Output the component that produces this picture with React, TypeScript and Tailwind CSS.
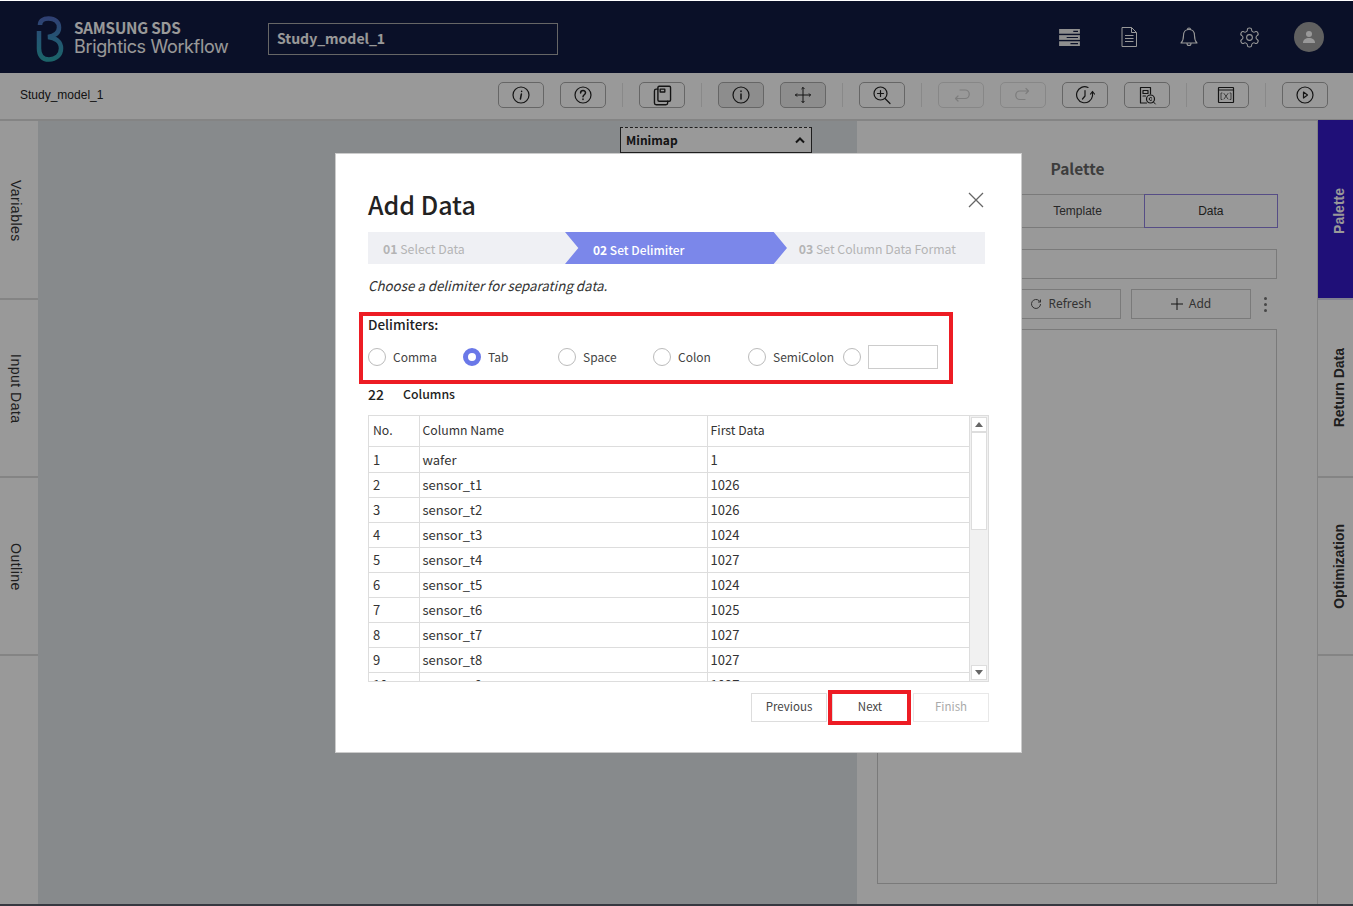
import React from 'react';

const NOTO = "font-['Noto_Sans_CJK_KR','Noto_Sans',sans-serif]";

const rows = [
  ['1', 'wafer', '1'],
  ['2', 'sensor_t1', '1026'],
  ['3', 'sensor_t2', '1026'],
  ['4', 'sensor_t3', '1024'],
  ['5', 'sensor_t4', '1027'],
  ['6', 'sensor_t5', '1024'],
  ['7', 'sensor_t6', '1025'],
  ['8', 'sensor_t7', '1027'],
  ['9', 'sensor_t8', '1027'],
  ['10', 'sensor_t9', '1027'],
];

const delimiters = ['Comma', 'Tab', 'Space', 'Colon', 'SemiColon'];

const Ico: React.FC<{ children: React.ReactNode; size?: number; color?: string }> = ({ children, size = 20, color = '#222' }) => (
  <svg width={size} height={size} viewBox="0 0 20 20" fill="none" stroke={color} strokeWidth="1.2" strokeLinecap="round" strokeLinejoin="round">
    {children}
  </svg>
);

const toolbar: (React.ReactNode | 'sep')[] = [
  <Ico><circle cx="10" cy="10" r="8" /><path d="M10.6 6.2v.4M10.4 9l-1 5" strokeWidth="1.5" /></Ico>,
  <Ico><circle cx="10" cy="10" r="8" /><path d="M7.6 8c0-3.2 4.9-3.2 4.9-.2 0 1.900-2.500 2-2.500 4M10 14v.4" strokeWidth="1.5" /></Ico>,
  'sep',
  <Ico size={23}><rect x="6" y="2" width="11" height="13" rx="1" /><path d="M6 4.500H4.500A1.500 1.500 0 0 0 3 6v10.500A1.500 1.500 0 0 0 4.500 18H13a1.500 1.500 0 0 0 1.500-1.500V15M8 4.500h4v2.500H8z" /></Ico>,
  'sep',
  <Ico><circle cx="10" cy="10" r="8" /><path d="M10 6v.4M10 9v5" strokeWidth="1.5" /></Ico>,
  <Ico><path d="M10 2.500v15M2.500 10h15M8.700 3.800L10 2.500l1.300 1.300M8.700 16.200L10 17.500l1.300-1.300M3.800 8.700L2.500 10l1.300 1.300M16.200 8.700L17.500 10l-1.300 1.300" strokeWidth="1" /></Ico>,
  'sep',
  <Ico><circle cx="8.500" cy="8.500" r="6.500" /><path d="M8.500 5.500v6M5.500 8.500h6M13 13.500l5 5" /></Ico>,
  'sep',
  <Ico color="#d0d0d0"><path d="M9 5h5a4.200 4.200 0 0 1 0 8.500H4.500M7 11l-2.500 2.500L7 16" /></Ico>,
  <Ico color="#d0d0d0"><path d="M15.500 6H7a4.200 4.200 0 0 0 0 8.500h5M13 3.500L15.500 6 13 8.500" /></Ico>,
  <Ico><path d="M13 2.500A8 8 0 1 0 17.500 11V7M15.500 9l2-2.500 2 2.500M10 5.500v5.500l-2.500 3" /></Ico>,
  <Ico><path d="M9.500 18H3.500V2.500h10v6.500M6 5.500h5v3H6zM6 11h2.500" /><circle cx="13.500" cy="14" r="4" /><path d="M14.800 13a1.500 1.500 0 1 0 0 2M16.500 17l1.800 2" strokeWidth="1" /></Ico>,
  'sep',
  <Ico><rect x="2.500" y="2.500" width="15" height="15" rx="0.500" /><path d="M2.500 5h15" /><path d="M6 8H5v6.500h1M14 8h1v6.500h-1M8 8.500l4 5.500M12 8.500L8 14" strokeWidth="0.900" stroke="#555" /></Ico>,
  'sep',
  <Ico><circle cx="10" cy="10" r="8" /><path d="M8.500 7l4 3-4 3z" /></Ico>,
];

const Logo = () => (
  <svg className="mt-[4px]" width="28" height="46" viewBox="0 0 28 46" fill="none">
    <defs>
      <linearGradient id="lg" x1="0" y1="0" x2="0" y2="1">
        <stop offset="0" stopColor="#4f6cc0" />
        <stop offset="0.5" stopColor="#3c8fc0" />
        <stop offset="1" stopColor="#2fa7b0" />
      </linearGradient>
    </defs>
    <path d="M4 9C4 5 7 2.500 12.500 2.500 19 2.500 23 6 23 11.500c0 5.500-5 8.500-11 9.500 7 .5 13 4.500 13 11.500 0 6.500-5 11-12 11S3 39 3 32.500V15" stroke="url(#lg)" strokeWidth="4.500" />
  </svg>
);

const SideTab: React.FC<{ label: string; active?: boolean; right?: boolean; h: string }> = ({ label, active, right, h }) => (
  <div className={`${h} flex items-center justify-center border-b-2 ${right ? 'pl-[7px]' : 'pr-[7px] pt-[2px]'} ${active ? 'pt-[3px] bg-[#341ac8] text-white border-[#d8d8f0]' : 'bg-white text-[#333] border-[#dcdcdc]'}`}>
    <span
      className={`text-[14px] ${right ? 'rotate-180 font-bold' : 'tracking-[0.5px]'} [writing-mode:vertical-rl] font-['Liberation_Sans',sans-serif]`}
    >
      {label}
    </span>
  </div>
);

export default function App() {
  return (
    <div className="relative w-[1353px] h-[906px] overflow-hidden bg-white">
      <div className="h-px bg-white" />
      {/* HEADER */}
      <header className="h-[72px] bg-[#121c43] flex items-center pl-[36px] pr-[29px]">
        <Logo />
        <div className="ml-[10px] w-[194px] text-white">
          <div className={`${NOTO} text-[16px] font-bold leading-[20px] tracking-[-0.2px] scale-x-95 origin-left whitespace-nowrap`}>SAMSUNG SDS</div>
          <div className="font-['Inter',sans-serif] text-[18px] leading-[20px] font-normal tracking-[-0.35px] whitespace-nowrap">Brightics Workflow</div>
        </div>
        <div className={`mt-[4px] w-[290px] h-[32px] border border-[#aaa] flex items-center pl-[8px] pb-[2px] text-white text-[14px] font-semibold ${NOTO}`}>
          Study_model_1
        </div>
        <div className="ml-auto flex items-center gap-[30px]">
          <div className="w-[30px] flex justify-center">
            <svg width="21" height="17" viewBox="0 0 22 18">
              <rect x="0" y="0" width="22" height="5" fill="#eee" />
              <rect x="0" y="6.500" width="22" height="5" fill="#eee" />
              <rect x="0" y="13" width="22" height="5" fill="#eee" />
              <path d="M15 2.500h5M8 9h12M12 15.500h8" stroke="#121c43" strokeWidth="1.200" />
            </svg>
          </div>
          <div className="w-[30px] flex justify-center">
            <svg width="16" height="20" viewBox="0 0 16 20" fill="none" stroke="#fff" strokeWidth="1">
              <path d="M1 .5h9.500L15.500 5.500v14H1zM10.500 .5v5h5M4 8.500h8.500M4 11.500h8.500M4 14.500h8.500" />
            </svg>
          </div>
          <div className="w-[30px] flex justify-center">
            <svg width="18" height="22" viewBox="0 0 18 22" fill="none" stroke="#fff" strokeWidth="1.100" strokeLinejoin="round">
              <path d="M1 17c2-2 2.500-4 2.500-7.500S5.500 3.500 9 3.500s5.500 2.500 5.500 6 .5 5.500 2.500 7.500zM7.500 3.500a1.500 1.500 0 0 1 3 0M7 17.500a2 2 0 0 0 4 0" />
            </svg>
          </div>
          <div className="w-[30px] flex justify-center">
            <svg width="23" height="23" viewBox="0 0 24 24" fill="none" stroke="#fff" strokeWidth="1.100">
              <path d="M12.220 2h-.44a2 2 0 0 0-2 2v.18a2 2 0 0 1-1 1.730l-.43.250a2 2 0 0 1-2 0l-.150-.080a2 2 0 0 0-2.730.730l-.220.380a2 2 0 0 0 .730 2.730l.150.100a2 2 0 0 1 1 1.720v.510a2 2 0 0 1-1 1.740l-.150.090a2 2 0 0 0-.730 2.730l.220.380a2 2 0 0 0 2.730.730l.150-.080a2 2 0 0 1 2 0l.430.250a2 2 0 0 1 1 1.730V20a2 2 0 0 0 2 2h.44a2 2 0 0 0 2-2v-.18a2 2 0 0 1 1-1.730l.430-.250a2 2 0 0 1 2 0l.150.080a2 2 0 0 0 2.730-.730l.220-.390a2 2 0 0 0-.730-2.730l-.150-.080a2 2 0 0 1-1-1.740v-.500a2 2 0 0 1 1-1.740l.150-.090a2 2 0 0 0 .730-2.730l-.220-.380a2 2 0 0 0-2.730-.730l-.150.080a2 2 0 0 1-2 0l-.430-.250a2 2 0 0 1-1-1.730V4a2 2 0 0 0-2-2z" />
              <circle cx="12" cy="12" r="3" />
            </svg>
          </div>
          <div className="w-[30px] h-[30px] rounded-full bg-[#a0a0a0] flex items-center justify-center">
            <svg width="14" height="14" viewBox="0 0 14 14" fill="#fff">
              <circle cx="7" cy="4" r="3" />
              <path d="M1 13c0-3.500 2.500-5 6-5s6 1.500 6 5z" />
            </svg>
          </div>
        </div>
      </header>

      {/* TOOLBAR */}
      <div className="h-[48px] bg-white border-b-2 border-[#ddd] flex items-center pl-[20px] pr-[25px] pb-[2px]">
        <span className="text-[12px] text-[#222] font-['Liberation_Sans',sans-serif]">Study_model_1</span>
        <div className="ml-auto flex items-center gap-4">
          {toolbar.map((item, i) =>
            item === 'sep' ? (
              <div key={i} className="w-px h-[24px] bg-[#e4e4e4]" />
            ) : (
              <button
                key={i}
                className={`w-[46px] h-[26px] rounded-[5px] border flex items-center justify-center ${
                  i === 5 || i === 6 ? 'bg-[#ececec] border-[#aaa]' : i === 10 || i === 11 ? 'border-[#e2e2e2] bg-white' : 'border-[#aaa] bg-white'
                }`}
              >
                {item}
              </button>
            )
          )}
        </div>
      </div>

      {/* BODY */}
      <div className="relative flex h-[783px]">
        <div className="w-[38px] bg-white flex flex-col">
          <SideTab h="h-[179px]" label="Variables" />
          <SideTab h="h-[178px]" label="Input Data" />
          <SideTab h="h-[178px]" label="Outline" />
        </div>
        <div className="relative flex-1 bg-[#e1e6ea]">
          <div className="absolute left-[582px] top-[6px] w-[192px] h-[26px] bg-white border border-[#333] [border-top-style:dashed] flex items-center justify-between px-[5px]">
            <span className={`${NOTO} text-[12px] font-semibold text-[#222]`}>Minimap</span>
            <svg width="12" height="8" viewBox="0 0 12 8" fill="none" stroke="#222" strokeWidth="2">
              <path d="M2 6.500l4-4 4 4" />
            </svg>
          </div>
        </div>
        <div className="w-[461px] bg-white border-r border-[#ddd] pl-[20px] flex flex-col">
          <div className={`${NOTO} h-[73px] pt-[33px] w-[401px] text-center text-[15.500px] font-semibold leading-[28px] text-[#666]`}>Palette</div>
          <div className="flex h-[35px] w-[401px] pb-px font-['Liberation_Sans',sans-serif] text-[12px] text-[#444]">
            <div className="flex-1 border border-[#ccc] flex items-center justify-center">Library</div>
            <div className="flex-1 border-y border-r border-[#ccc] flex items-center justify-center">Template</div>
            <div className="flex-1 border border-[#8f80e0] -ml-px flex items-center justify-center text-[#333]">Data</div>
          </div>
          <div className="mt-[20px] h-[30px] w-[400px] border border-[#ccc]" />
          <div className="mt-[10px] h-[30px] w-[400px] flex items-center justify-end gap-[10px] pr-[26px] text-[12px] text-[#555] font-['Noto_Sans',sans-serif]">
            <div className="w-[120px] h-[30px] border border-[#ccc] flex items-center justify-center gap-[6px]">
              <svg width="12" height="12" viewBox="0 0 24 24" fill="none" stroke="#555" strokeWidth="2">
                <path d="M21 12a9 9 0 1 1-2.600-6.400L21 8M21 3v5h-5" />
              </svg>
              Refresh
            </div>
            <div className="w-[120px] h-[30px] border border-[#ccc] flex items-center justify-center gap-[6px]">
              <svg width="12" height="12" viewBox="0 0 12 12" stroke="#222" strokeWidth="1">
                <path d="M6 0v12M0 6h12" />
              </svg>
              Add
            </div>
            <div className="absolute right-[86px] w-[3px] flex flex-col gap-[3px]">
              <span className="w-[3px] h-[3px] rounded-full bg-[#777]" />
              <span className="w-[3px] h-[3px] rounded-full bg-[#777]" />
              <span className="w-[3px] h-[3px] rounded-full bg-[#777]" />
            </div>
          </div>
          <div className="mt-[10px] h-[555px] w-[400px] border border-[#ccc]" />
        </div>
        <div className="w-[35px] -mt-px bg-white flex flex-col">
          <SideTab h="h-[180px]" label="Palette" right active />
          <SideTab h="h-[178px]" label="Return Data" right />
          <SideTab h="h-[178px]" label="Optimization" right />
        </div>
      </div>
      <div className="h-[2px] bg-[#5a5e6b]" />

      {/* OVERLAY */}
      <div className="absolute left-0 right-0 top-px bottom-0 bg-black/40" />

      {/* MODAL */}
      <div className={`absolute left-[335px] top-[153px] w-[687px] h-[600px] bg-white border border-[#ccc] pt-[34px] pl-[32px] pr-[32px] ${NOTO} text-[#333]`}>
        <div className="relative h-[34px] -top-px">
          <h1 className="text-[25px] font-medium leading-[34px] text-[#222]">Add Data</h1>
          <svg className="absolute left-[600px] top-[5px]" width="16" height="16" viewBox="0 0 16 16" stroke="#666" strokeWidth="1.300">
            <path d="M1 1l14 14M15 1L1 15" />
          </svg>
        </div>

        <div className="mt-[10px] h-[32px] w-[617px] bg-[#eff0f4] relative flex items-center pt-[3px] text-[12.300px] text-[#b4b4b4]">
          <div className="w-[197px] pl-[15px]"><b className="font-bold">01</b> Select Data</div>
          <div className="absolute left-[197px] top-0 h-[32px] w-[222px] bg-[#7b87ea] [clip-path:polygon(0_0,94%_0,100%_50%,94%_100%,0_100%,6%_50%)] flex items-center pt-[3px] pl-[28px] text-[12px] text-white font-medium">
            <span><b className="font-bold">02</b> Set Delimiter</span>
          </div>
          <div className="ml-auto pr-[29px]"><b className="font-bold">03</b> Set Column Data Format</div>
        </div>

        <p className="mt-[12px] h-[20px] text-[13.300px] leading-[20px] italic text-[#333]">Choose a delimiter for separating data.</p>

        <div className="mt-[18px] h-[20px] text-[13.500px] leading-[20px] font-medium text-[#222]">Delimiters:</div>

        <div className="mt-[11px] h-[24px] flex items-center text-[12px] text-[#444]">
          {delimiters.map(d => (
            <div key={d} className="w-[95px] flex items-center gap-[7px]">
              <span className={`w-[18px] h-[18px] rounded-full bg-white shrink-0 ${d === 'Tab' ? 'border-[5px] border-[#6a78e8]' : 'border border-[#bbb]'}`} />
              {d}
            </div>
          ))}
          <span className="w-[18px] h-[18px] rounded-full border border-[#bbb] shrink-0" />
          <div className="ml-[7px] w-[70px] h-[24px] border border-[#ccc]" />
        </div>

        <div className="mt-[15px] h-[20px] flex items-center text-[12.300px] font-medium text-[#222]">
          <span className="w-[35px] text-[14px]">22</span>
          <span>Columns</span>
        </div>

        <div className="mt-[11px] w-[621px] h-[267px] border border-[#ddd] flex overflow-hidden text-[13px] text-[#333]">
          <table className="w-[601px] h-fit table-fixed border-collapse shrink-0">
            <colgroup>
              <col className="w-[50px]" />
              <col className="w-[288px]" />
              <col />
            </colgroup>
            <thead>
              <tr className="h-[30px] text-[12.250px] text-left">
                <th className="font-normal pl-[4px] pb-[2px] border-r border-b border-[#ddd]">No.</th>
                <th className="font-normal pl-[3px] pb-[2px] border-r border-b border-[#ddd]">Column Name</th>
                <th className="font-normal pl-[3px] pb-[2px] border-r border-b border-[#ddd]">First Data</th>
              </tr>
            </thead>
            <tbody>
              {rows.map((r, i) => (
                <tr key={r[0]} className={i === 0 ? 'h-[26px] [&>td]:pt-[2px]' : 'h-[25px]'}>
                  <td className="pl-[4px] border-r border-b border-[#ddd]">{r[0]}</td>
                  <td className="pl-[3px] border-r border-b border-[#ddd]">{r[1]}</td>
                  <td className="pl-[3px] border-r border-b border-[#ddd]">{r[2]}</td>
                </tr>
              ))}
            </tbody>
          </table>
          <div className="flex-1 bg-[#f1f1f1] p-px flex flex-col">
            <div className="h-[15px] bg-white border border-[#ddd] flex items-center justify-center">
              <svg width="8" height="5" viewBox="0 0 8 5" fill="#666"><path d="M4 0l4 5H0z" /></svg>
            </div>
            <div className="h-[98px] bg-white border border-[#ddd]" />
            <div className="mt-auto h-[15px] bg-white border border-[#ddd] flex items-center justify-center">
              <svg width="8" height="5" viewBox="0 0 8 5" fill="#666"><path d="M4 5l4-5H0z" /></svg>
            </div>
          </div>
        </div>

        <div className="mt-[11px] w-[621px] flex justify-end gap-[5px] text-[11.500px] text-[#444]">
          <button className="w-[76px] h-[29px] pb-px border border-[#ddd]">Previous</button>
          <button className="w-[76px] h-[29px] pb-px border border-[#ddd]">Next</button>
          <button className="w-[76px] h-[29px] pb-px border border-[#e8e8e8] text-[#aaa]">Finish</button>
        </div>

        {/* red annotation boxes */}
        <div className="absolute left-[23px] top-[158px] w-[594px] h-[72px] border-4 border-[#ed1c24]" />
        <div className="absolute left-[492px] top-[536px] w-[83px] h-[35px] border-4 border-[#ed1c24]" />
      </div>
    </div>
  );
}
